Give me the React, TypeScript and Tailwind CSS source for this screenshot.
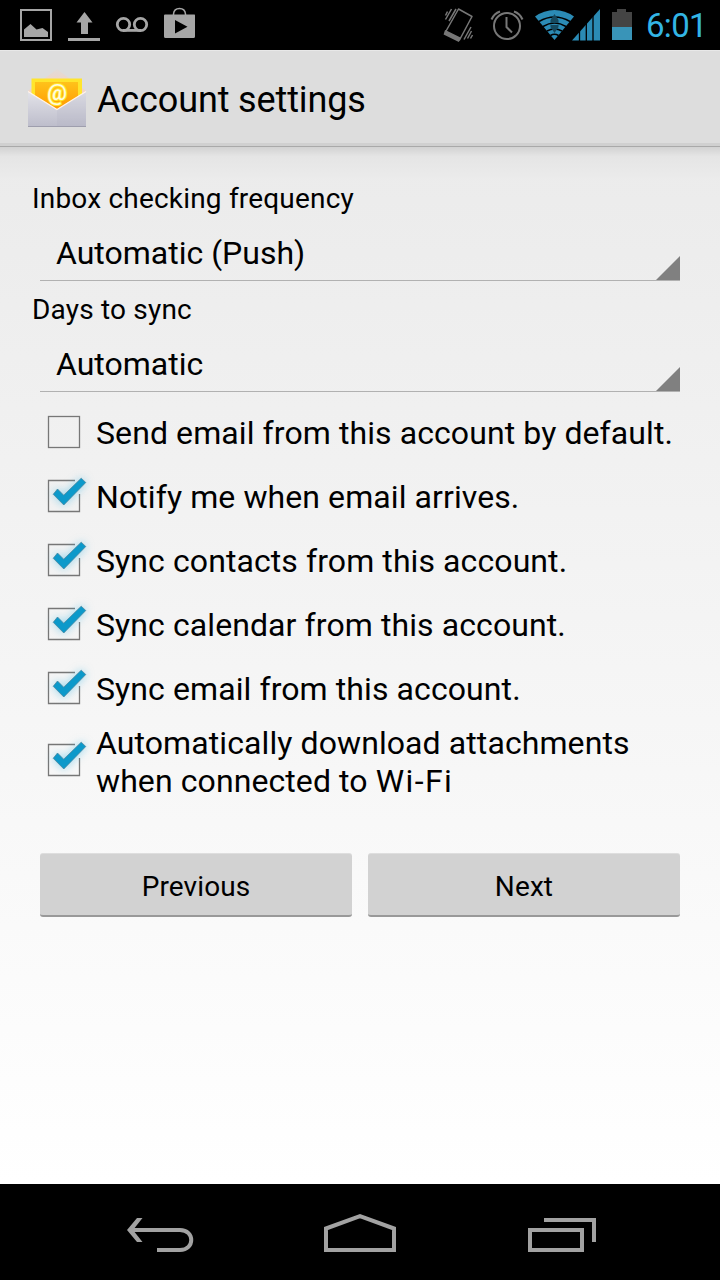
import { useState, type ReactNode } from "react";

const checkboxItems = [
  { id: "default", label: "Send email from this account by default.", checked: false },
  { id: "notify", label: "Notify me when email arrives.", checked: true },
  { id: "contacts", label: "Sync contacts from this account.", checked: true },
  { id: "calendar", label: "Sync calendar from this account.", checked: true },
  { id: "email", label: "Sync email from this account.", checked: true },
];

function StatusBar() {
  return (
    <div className="flex h-[50px] shrink-0 items-start justify-between bg-black">
      <svg className="h-[50px] w-[220px]" viewBox="0 0 220 50" fill="#a6a6a6">
        <rect x="21" y="10" width="30" height="30" fill="none" stroke="#a6a6a6" strokeWidth="2" />
        <path d="M24 37V29.5L30.5 24L36.500 29.500L42.500 28L48 32V37Z" />
        <path d="M84.500 12L92.500 22.500H88V34H81V22.500H76.500ZM68 38H100V41H68Z" />
        <g fill="none" stroke="#a6a6a6" strokeWidth="2.800">
          <circle cx="123.500" cy="24.500" r="6.200" />
          <circle cx="140.500" cy="24.500" r="6.200" />
          <path d="M123 30.400H141" />
        </g>
        <path d="M173.500 15V14Q174 8.500 179.500 8.500T185.500 14V15" fill="none" stroke="#a6a6a6" strokeWidth="1.500" />
        <path fillRule="evenodd" d="M165 14.500H194.500Q195 14.500 195 15.500V36.500Q195 38 193.500 38H165.500Q164 38 164 36.500V15.500Q164 14.500 165 14.500ZM175 20V33.500L187.500 26.700Z" />
      </svg>
      <div className="flex">
        <svg className="h-[50px] w-[210px]" viewBox="430 0 210 50" fill="none">
          <g stroke="#777" strokeWidth="1.500">
            <path d="M458.500 9L472 16.500L459.500 40L445.500 32Z" strokeLinejoin="round" />
            <path d="M445.500 31L460 38L458.500 41L444.500 34Z" fill="#777" />
            <path d="M456 9L449 21M451.500 9L445.500 19.500M447.500 11.500L445.500 15.500M471 27L464 39.500M471.500 31L467.500 38.500M472.500 35L470.500 38.500" />
          </g>
          <g stroke="#777" strokeWidth="2">
            <circle cx="507" cy="26" r="13" />
            <path d="M506.500 17V27L512 32.500M491.500 19.500Q494 13.500 500 11.500M514 11.500Q520 13.500 522.500 19.500" />
          </g>
          <path d="M554.500 40L535 16.500Q544 10 554.500 10T574 16.500Z" fill="#2b8bb5" />
          <g stroke="#000" strokeWidth="1.500">
            <path d="M539 21.500Q554.500 12.500 570 21.500M543 26.500Q554.500 19.500 566 26.500M547 31Q554.500 27 562 31M550.500 35.500Q554.500 33 558.500 35.500" />
          </g>
          <path d="M554.500 14L558.500 20V23H550.500V20ZM554.500 33L558.500 27V25H550.500V27Z" fill="#15495e" />
          <path d="M572 40.500L600 9V40.500Z" fill="#2b8bb5" />
          <path d="M579.500 20V41M586.300 20V41M593 10V41" stroke="#000" strokeWidth="1.300" />
          <path d="M612 12H617V9H626V12H632V27H612Z" fill="#444" />
          <path d="M612 27H632V40H612Z" fill="#3994b8" />
        </svg>
        <span className="w-[80px] pl-[6px] text-[33px] leading-[51px] tracking-[-0.7px] text-[#33b5e5] whitespace-nowrap">6:01</span>
      </div>
    </div>
  );
}

function EmailIcon() {
  return (
    <svg className="h-[64px] w-[64px]" viewBox="25 68 64 64">
      <defs>
        <linearGradient id="paper" x1="0" y1="0" x2="0" y2="1">
          <stop stopColor="#ffc21a" />
          <stop offset="1" stopColor="#ff9800" />
        </linearGradient>
        <linearGradient id="envelope" x1="0" y1="0" x2="0" y2="1">
          <stop stopColor="#e3e3e9" />
          <stop offset="1" stopColor="#bdbdcb" />
        </linearGradient>
        <linearGradient id="fold" x1="0" y1="0" x2="0" y2="1">
          <stop stopColor="#e1dbd9" />
          <stop offset=".3" stopColor="#f5d2c0" />
          <stop offset="1" stopColor="#ddd" />
        </linearGradient>
      </defs>
      <path d="M28 91L57 69L86 91V126H28Z" fill="url(#fold)" />
      <path d="M31.500 78.500H82V100L57 112L31.500 100Z" fill="#ffe52c" />
      <path d="M35 82H78V99L57 110L35 99Z" fill="url(#paper)" />
      <text x="57" y="99.500" textAnchor="middle" fontFamily="Roboto, sans-serif" fontSize="22" fontWeight="500" fill="#fffbe0" stroke="#ffe52c" strokeWidth="2" paintOrder="stroke">@</text>
      <path d="M28 91.500L57 109.500L86 91.500V126.500H28Z" fill="url(#envelope)" />
      <path d="M57 109.500L86 91.500V126.500H57Z" fill="#aaaabd" opacity=".16" />
      <path d="M28 91.500L57 109.500L86 91.500" fill="none" stroke="#fff4e9" strokeWidth="1.200" />
      <path d="M28 126.500H86" stroke="#9e9ead" />
    </svg>
  );
}

function Spinner({ label, value }: { label: string; value: string }) {
  return (
    <div className="h-[111px]">
      <div className="h-[40px] pl-8 text-[28px] leading-[41px] tracking-[0.19px]">{label}</div>
      <button className="mx-10 flex h-[63px] w-[640px] items-stretch justify-between border-b border-[#b1b1b1] pl-4 text-left">
        <span className="text-[32px] leading-[70px]">{value}</span>
        <svg className="h-6 w-6 self-end" viewBox="0 0 24 24" fill="#808080">
          <path d="M24 0V24H0Z" />
        </svg>
      </button>
    </div>
  );
}

function CheckMark({ checked }: { checked: boolean }) {
  return (
    <svg className="h-[48px] w-[48px] shrink-0 overflow-visible" viewBox="0 0 48 48">
      {checked ? (
        <>
          <path d="M35 8.500H8.500V39.500H39.500V22" fill="none" stroke="#777" strokeWidth="1.300" />
          <path className="drop-shadow-[0_0_4px_#33b5e580]" d="M13.200 22.300L17.500 17L23.700 23.200L41.200 6.200L45.800 10.500L23.800 33Z" fill="#0c99ca" stroke="#477f96" strokeWidth=".7" />
        </>
      ) : (
        <rect x="8.500" y="8.500" width="31" height="31" fill="none" stroke="#777" strokeWidth="1.300" />
      )}
    </svg>
  );
}

function CheckRow({ children, initial, tall = false }: { children: ReactNode; initial: boolean; tall?: boolean }) {
  const [checked, setChecked] = useState(initial);
  return (
    <button
      role="checkbox"
      aria-checked={checked}
      onClick={() => setChecked(!checked)}
      className={tall ? "flex h-20 w-full items-center pl-10 text-left" : "flex h-16 w-full items-center pl-10 text-left"}
    >
      <CheckMark checked={checked} />
      <span className={tall ? "pl-2 pt-[3px] text-[32px] leading-[38px] tracking-[0.09px]" : "pl-2 pt-px text-[32px] leading-[38px] tracking-[0.09px]"}>
        {children}
      </span>
    </button>
  );
}

function NavigationBar() {
  return (
    <nav className="flex h-24 shrink-0 items-center justify-center bg-black">
      <svg className="h-24 w-[720px]" viewBox="0 1184 720 96" fill="none" stroke="#a2a2a2" strokeWidth="4">
        <path d="M133 1230H180C195 1230 195 1250 180 1250H157" />
        <path d="M137 1218H142.500L133 1230L142.500 1242H137L127 1230Z" fill="#a2a2a2" stroke="none" />
        <path d="M326 1250V1228.500L360 1216.200L394 1228.500V1250Z" />
        <path d="M530 1230H582V1250H530ZM544 1220H594V1242" />
      </svg>
    </nav>
  );
}

export default function App() {
  return (
    <div className="flex h-[1280px] w-[720px] flex-col overflow-hidden bg-black font-['Roboto',sans-serif] text-black">
      <StatusBar />
      <header className="flex h-[97px] shrink-0 items-center border-b border-[#a9a9a9] bg-[#ddd] pt-1 pl-[25px] shadow-[inset_0_-3px_0_#d0d0d0,inset_0_1px_0_#e8e8e8]">
        <EmailIcon />
        <h1 className="pl-2 text-[36px] leading-[42px] tracking-[-0.13px]">Account settings</h1>
      </header>
      <main className="flex-1 bg-linear-to-b from-[#ebebeb] to-white">
        <div className="h-[31px] bg-linear-to-b from-[#d2d2d2] via-[#e5e5e5] via-30% to-[#ebebeb]" />
        <Spinner label="Inbox checking frequency" value="Automatic (Push)" />
        <Spinner label="Days to sync" value="Automatic" />
        {checkboxItems.map((item) => (
          <CheckRow key={item.id} initial={item.checked}>{item.label}</CheckRow>
        ))}
        <CheckRow initial tall>
          Automatically download attachments
          <br />
          when connected to <span className="tracking-[1.4px]">Wi-Fi</span>
        </CheckRow>
        <div className="mt-[53px] flex gap-4 px-10">
          {["Previous", "Next"].map((label) => (
            <button key={label} className="h-16 flex-1 rounded-[3px] border-t border-b-2 border-t-[#dedede] border-b-[#999] bg-[#d2d2d2] pt-1 text-[28px] tracking-[0.1px]">{label}</button>
          ))}
        </div>
      </main>
      <NavigationBar />
    </div>
  );
}
